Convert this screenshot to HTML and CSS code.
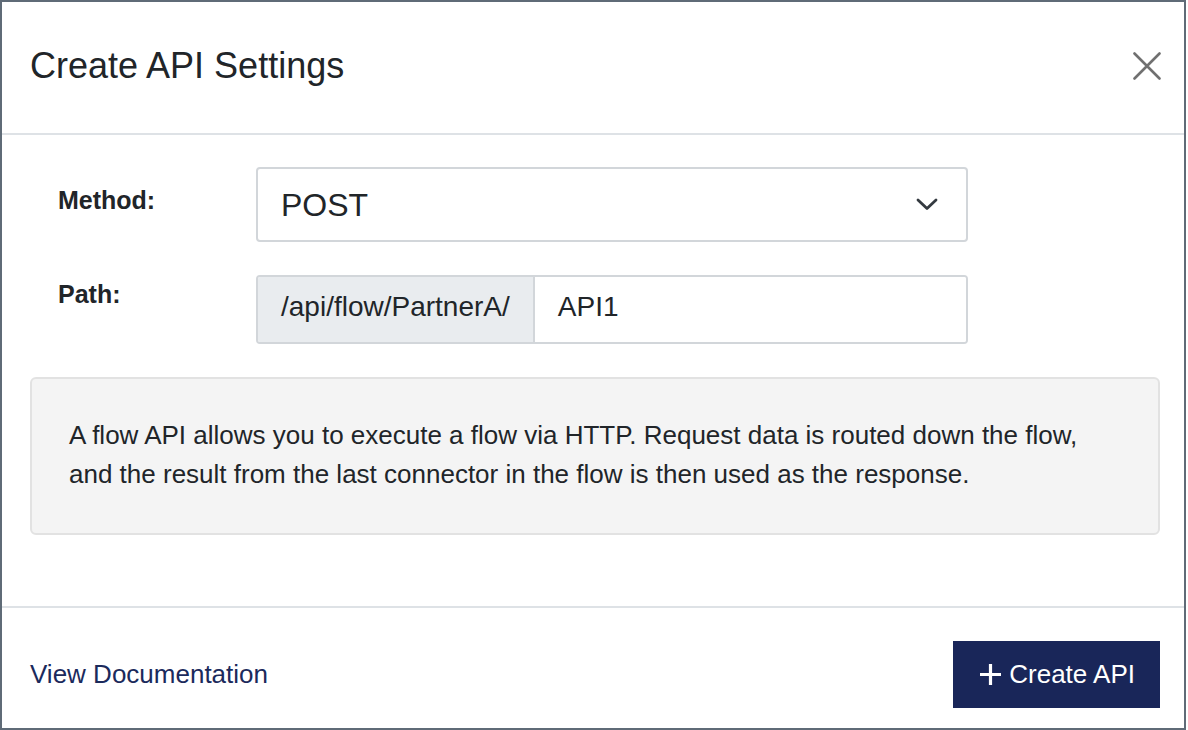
FILE: index.html
```html
<!DOCTYPE html>
<html lang="en">
<head>
<meta charset="utf-8">
<title>Create API Settings</title>
<link rel="stylesheet" href="styles.css">
</head>
<body>
<div class="modal">
  <header class="modal-header">
    <h1 class="modal-title">Create API Settings</h1>
    <button class="close-btn" type="button" aria-label="Close">
      <svg width="28" height="28" viewBox="0 0 28 28"><path d="M1.5 1.5 L26.5 26.5 M26.5 1.5 L1.5 26.5" stroke="#707070" stroke-width="2.6" fill="none" stroke-linecap="round"/></svg>
    </button>
  </header>
  <div class="modal-body">
    <div class="form-row">
      <label class="form-label label-method">Method:</label>
      <div class="select">
        <span class="select-value">POST</span>
        <svg class="chevron" width="22" height="13" viewBox="0 0 22 13"><path d="M2 2 L11 10.5 L20 2" stroke="#343a40" stroke-width="2.8" fill="none" stroke-linecap="round" stroke-linejoin="round"/></svg>
      </div>
    </div>
    <div class="form-row">
      <label class="form-label label-path">Path:</label>
      <div class="input-group">
        <span class="addon">/api/flow/PartnerA/</span>
        <span class="input">API1</span>
      </div>
    </div>
    <div class="info">A flow API allows you to execute a flow via HTTP. Request data is routed down the flow, and the result from the last connector in the flow is then used as the response.</div>
  </div>
  <footer class="modal-footer">
    <a class="doc-link" href="#">View Documentation</a>
    <button class="primary-btn" type="button">
      <svg width="23" height="23" viewBox="0 0 23 23"><path d="M11.5 1 V22 M1 11.5 H22" stroke="#ffffff" stroke-width="3.2" fill="none"/></svg>
      <span>Create API</span>
    </button>
  </footer>
</div>
</body>
</html>
```
FILE: styles.css
```css
* { box-sizing: border-box; }
html, body { margin: 0; padding: 0; background: #ffffff; }
body {
  font-family: "Liberation Sans", Arial, Helvetica, sans-serif;
  color: #212529;
}
.modal {
  width: 1186px;
  height: 730px;
  border: 2px solid #5f6b77;
  display: flex;
  flex-direction: column;
  background: #ffffff;
}
.modal-header {
  height: 133px;
  border-bottom: 2px solid #dee2e6;
  display: flex;
  align-items: center;
  justify-content: space-between;
  padding: 0 23px 3px 28px;
}
.modal-title {
  margin: 0;
  font-size: 36px;
  font-weight: 400;
  line-height: 1.2;
  color: #212529;
}
.close-btn {
  border: 0;
  background: transparent;
  padding: 0;
  width: 28px;
  height: 28px;
  display: flex;
  cursor: pointer;
}
.modal-body {
  flex: 1;
  padding: 32px 24px 0 28px;
}
.form-row {
  display: flex;
  align-items: flex-start;
  margin-bottom: 33px;
}
.form-label {
  width: 226px;
  flex: none;
  padding-left: 28px;
  font-size: 25px;
  font-weight: 700;
  line-height: 30px;
}
.label-method { padding-top: 18px; }
.label-path { padding-top: 4px; }
.select {
  width: 712px;
  height: 75px;
  border: 2px solid #d2d6da;
  border-radius: 4px;
  display: flex;
  align-items: center;
  justify-content: space-between;
  padding: 0 28px 0 23px;
  background: #ffffff;
}
.select-value {
  font-size: 32px;
  line-height: 1.5;
}
.chevron { display: block; }
.input-group {
  width: 712px;
  height: 69px;
  border: 2px solid #d2d6da;
  border-radius: 4px;
  display: flex;
  overflow: hidden;
}
.addon, .input {
  font-size: 28px;
  line-height: 42px;
  padding: 9px 23px 14px;
}
.addon {
  background: #e9ecef;
  border-right: 2px solid #d2d6da;
  color: #212529;
}
.input {
  flex: 1;
  background: #ffffff;
}
.info {
  margin-top: 0;
  border: 2px solid #e2e2e2;
  border-radius: 6px;
  background: #f4f4f4;
  padding: 37px 37px 39px 37px;
  font-size: 26px;
  line-height: 39px;
}
.modal-footer {
  border-top: 2px solid #dee2e6;
  height: 122px;
  display: flex;
  align-items: center;
  justify-content: space-between;
  padding: 31px 24px 18px 28px;
}
.doc-link {
  font-size: 26px;
  color: #1b2a5c;
  text-decoration: none;
}
.primary-btn {
  height: 67px;
  border: 0;
  border-radius: 0;
  background: #192659;
  color: #ffffff;
  font-family: "Liberation Sans", Arial, Helvetica, sans-serif;
  font-size: 26px;
  display: flex;
  align-items: center;
  gap: 7px;
  padding: 0 25px 0 26px;
  cursor: pointer;
}
.primary-btn svg { display: block; }
```
